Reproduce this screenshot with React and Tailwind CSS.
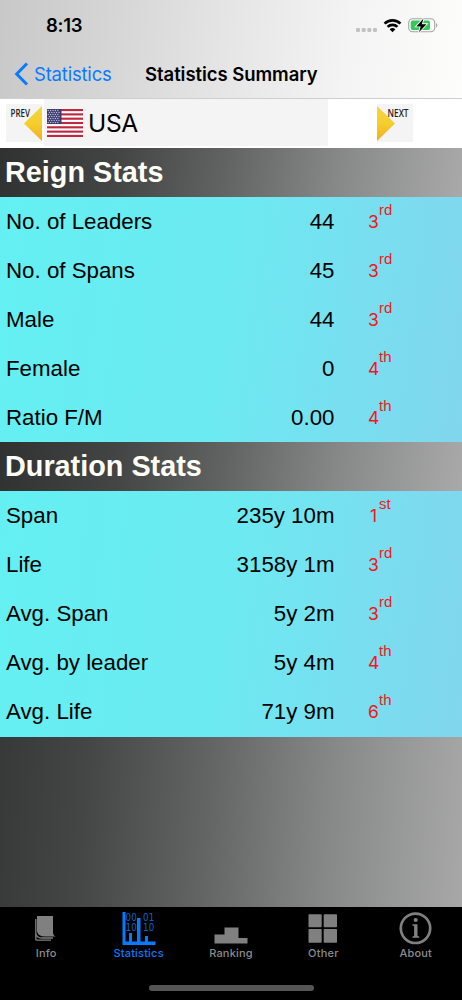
import React from 'react';

const reignStats = [
  { label: 'No. of Leaders', value: '44', rank: '3', suffix: 'rd' },
  { label: 'No. of Spans', value: '45', rank: '3', suffix: 'rd' },
  { label: 'Male', value: '44', rank: '3', suffix: 'rd' },
  { label: 'Female', value: '0', rank: '4', suffix: 'th' },
  { label: 'Ratio F/M', value: '0.00', rank: '4', suffix: 'th' },
];

const durationStats = [
  { label: 'Span', value: '235y 10m', rank: '1', suffix: 'st' },
  { label: 'Life', value: '3158y 1m', rank: '3', suffix: 'rd' },
  { label: 'Avg. Span', value: '5y 2m', rank: '3', suffix: 'rd' },
  { label: 'Avg. by leader', value: '5y 4m', rank: '4', suffix: 'th' },
  { label: 'Avg. Life', value: '71y 9m', rank: '6', suffix: 'th' },
];

function StatusBar() {
  return (
    <div className="flex h-[50px] items-start justify-between pl-[46px] pr-[24px] pt-[14px]">
      <span className="text-[18.5px] font-semibold leading-[22px] tracking-[-0.3px]">8:13</span>
      <svg className="mt-[2px]" width="84" height="20" viewBox="354 16 84 20">
        <g fill="#c2c2c2">
          <rect x="356" y="28" width="4" height="4" rx="1.2" />
          <rect x="361.7" y="28" width="4" height="4" rx="1.2" />
          <rect x="367.3" y="28" width="4" height="4" rx="1.2" />
          <rect x="373" y="28" width="4" height="4" rx="1.2" />
        </g>
        <g fill="none" stroke="#000" strokeWidth="2.7">
          <path d="M384.6 23.6a11.2 11.2 0 0 1 15.8 0" />
          <path d="M387.6 26.9a7 7 0 0 1 9.8 0" />
        </g>
        <path d="M389.6 29.3a4.2 4.2 0 0 1 5.8 0l-2.9 3z" fill="#000" />
        <rect x="408.7" y="18.7" width="26" height="13" rx="4" fill="#fafafa" stroke="#a5a5a5" strokeWidth="1.1" />
        <path d="M436.2 23c1.5.8 1.5 3.6 0 4.4z" fill="#999" />
        <rect x="410.7" y="20.6" width="19.3" height="9.3" rx="2" fill="#34c759" />
        <path d="M423.5 18.6l-7.2 7.8h4.4l-1.7 5.8 7.4-8h-4.6z" fill="#000" stroke="#fff" strokeWidth="1.8" paintOrder="stroke" />
      </svg>
    </div>
  );
}

function NavBar() {
  return (
    <div className="flex h-12 items-center pl-[14px]">
      <svg width="15" height="24" viewBox="0 0 15 24" fill="none" stroke="#087aff" strokeWidth="3">
        <path d="M13 1.5L2.7 12 13 22.5" />
      </svg>
      <span className="ml-[5px] w-[111px] text-[18.5px] leading-6 tracking-[-0.2px] text-[#087aff]">Statistics</span>
      <span className="whitespace-nowrap text-[18.5px] font-semibold leading-6 tracking-[-0.05px]">Statistics Summary</span>
    </div>
  );
}

function Flag() {
  return (
    <svg width="36" height="28" viewBox="0 0 36 28">
      <rect width="36" height="28" fill="#fff" />
      {[0, 1, 2, 3, 4, 5, 6].map((i) => (
        <rect key={i} y={i * 4.31} width="36" height="2.15" fill="#bf2940" />
      ))}
      <rect width="14.5" height="15" fill="#3c3b6e" />
      {[1.5, 3.5, 5.5, 7.5, 9.5, 11.5, 13.5].map((y, row) =>
        [1.2, 3.6, 6, 8.4, 10.8].map((x) => (
          <circle key={`${x}-${y}`} cx={x + (row % 2) * 1.2} cy={y} r="0.65" fill="#c5c5dd" />
        ))
      )}
    </svg>
  );
}

function ArrowGradient({ id }) {
  return (
    <defs>
      <linearGradient id={id} x1="0" y1="0" x2="0" y2="1">
        <stop offset="0" stopColor="#f4d53b" />
        <stop offset="0.5" stopColor="#f4ce2e" />
        <stop offset="1" stopColor="#f4ac20" />
      </linearGradient>
    </defs>
  );
}

function CountryRow() {
  return (
    <div className="flex h-[49px] bg-white">
      <svg className="ml-[6px] mt-[5px] font-['Open_Sans',sans-serif] text-[10px] font-semibold" width="36" height="38" viewBox="0 0 36 38">
        <ArrowGradient id="prevArrow" />
        <rect width="36" height="38" fill="#f4f4f4" />
        <path d="M36 2v35L18 19.5z" fill="url(#prevArrow)" />
        <text x="4.5" y="13" textLength="19.5" lengthAdjust="spacingAndGlyphs" fill="#222">PREV</text>
      </svg>
      <div className="ml-[2px] flex h-[47px] w-[284px] items-center bg-[#f4f4f4] pl-[3px]">
        <Flag />
        <span className="ml-[5px] text-[24.5px] leading-8 tracking-[-0.3px]">USA</span>
      </div>
      <svg className="ml-[49px] mt-[5px] font-['Open_Sans',sans-serif] text-[10px] font-semibold" width="36" height="38" viewBox="0 0 36 38">
        <ArrowGradient id="nextArrow" />
        <rect width="36" height="38" fill="#f4f4f4" />
        <path d="M0 2v35l18-17.5z" fill="url(#nextArrow)" />
        <text x="10.5" y="13" textLength="21" lengthAdjust="spacingAndGlyphs" fill="#222">NEXT</text>
      </svg>
    </div>
  );
}

function StatRow({ stat }) {
  return (
    <div className="flex h-[49.08px] items-center pl-[6px] font-['Liberation_Sans',Arial,sans-serif] text-[22.3px] leading-[26px]">
      <span className="w-[160px] whitespace-nowrap">{stat.label}</span>
      <span className="w-[168.5px] whitespace-nowrap text-right">{stat.value}</span>
      <div className="ml-[33.5px] flex text-[#f81418]">
        <span className="w-[11px] text-center font-['Inter',sans-serif] text-[17.5px] leading-6">{stat.rank}</span>
        <span className="-mt-[12px] text-[15px] leading-6">{stat.suffix}</span>
      </div>
    </div>
  );
}

function StatSection({ title, stats }) {
  return (
    <section>
      <h2 className="h-[49px] bg-[linear-gradient(98deg,#303231_0%,#444645_26%,#626463_49%,#878988_73%,#a9a9a9_100%)] pl-[5px] font-['Liberation_Sans',Arial,sans-serif] text-[28.8px] font-bold leading-[48px] text-[#fffff8]">
        {title}
      </h2>
      <div className="bg-[linear-gradient(97deg,#64f0f2_0%,#6ceaf1_48%,#78dff0_75%,#80d6ee_100%)]">
        {stats.map((stat) => (
          <StatRow key={stat.label} stat={stat} />
        ))}
      </div>
    </section>
  );
}

const tabs = [
  {
    name: 'Info',
    icon: (
      <svg width="36" height="36" viewBox="0 0 36 36" fill="#808080">
        <path d="M9 5h16v17q.3 3 3.5 3.6H17q-6.8 0-8-5z" />
        <path d="M7.8 8v14q.5 5 6 5H25M7.8 22v6.8q0 .4 1 .4H23" fill="none" stroke="#808080" strokeWidth="1.3" />
      </svg>
    ),
  },
  {
    name: 'Statistics',
    active: true,
    icon: (
      <svg width="36" height="36" viewBox="0 0 36 36" fill="#087aff">
        <path d="M1.5 1h3v29.5h30V34h-33z" />
        <path d="M8 22h3v9H8zM16 7h3.5v24H16zM24 25h3v6h-3z" />
        <g className="font-['DejaVu_Sans',sans-serif] text-[10px]" fill="#0764c8">
          <text x="4.5" y="10" textLength="11.5" lengthAdjust="spacingAndGlyphs">00</text>
          <text x="22" y="10" textLength="11.5" lengthAdjust="spacingAndGlyphs">01</text>
          <text x="4.5" y="20" textLength="11.5" lengthAdjust="spacingAndGlyphs">10</text>
          <text x="22" y="20" textLength="11.5" lengthAdjust="spacingAndGlyphs">10</text>
        </g>
      </svg>
    ),
  },
  {
    name: 'Ranking',
    icon: (
      <svg width="36" height="36" viewBox="0 0 36 36" fill="#808080">
        <path d="M1.5 23.5h10v-7h14V27h9v5.5h-33z" />
      </svg>
    ),
  },
  {
    name: 'Other',
    icon: (
      <svg width="36" height="36" viewBox="0 0 36 36" fill="#808080">
        <rect x="3.5" y="3.2" width="13.2" height="13" rx=".7" />
        <rect x="18.7" y="3.2" width="13.3" height="13" rx=".7" />
        <rect x="3.5" y="18" width="13.2" height="13.8" rx=".7" />
        <rect x="18.7" y="18" width="13.3" height="13.8" rx=".7" />
      </svg>
    ),
  },
  {
    name: 'About',
    icon: (
      <svg width="36" height="36" viewBox="0 0 36 36" fill="#808080">
        <circle cx="17.5" cy="17.3" r="14.7" fill="none" stroke="#808080" strokeWidth="2.7" />
        <circle cx="17.7" cy="9" r="2.1" />
        <path d="M14.4 13.3h5.1v11.7l1.8.6v1.1h-6.8v-1.1l1.6-.6V15l-1.7-.6z" />
      </svg>
    ),
  },
];

function TabBar() {
  return (
    <footer className="flex h-[93px] flex-col items-center bg-black">
      <nav className="flex w-full justify-between pt-[4px]">
        {tabs.map((tab) => (
          <div
            key={tab.name}
            className={`flex w-[92.4px] flex-col items-center text-[11px] font-medium leading-[13px] tracking-[0.2px] ${tab.active ? 'text-[#087aff]' : 'text-[#8c8c8c]'}`}
          >
            {tab.icon}
            <span>{tab.name}</span>
          </div>
        ))}
      </nav>
      <div className="mt-[25px] h-[6px] w-[165px] rounded-full bg-[#555]" />
    </footer>
  );
}

function App() {
  return (
    <div className="flex h-[1000px] w-[462px] flex-col overflow-hidden bg-[linear-gradient(94deg,#303231_0%,#444645_26%,#626463_49%,#878988_73%,#a9a9a9_100%)] font-['Inter',sans-serif] text-black">
      <header className="h-[99px] shrink-0 border-b border-[#cecece] bg-[linear-gradient(98deg,#c8c8c8_0%,#d6d6d6_25%,#e6e6e6_50%,#f4f4f4_75%,#fdfdfc_100%)]">
        <StatusBar />
        <NavBar />
      </header>
      <CountryRow />
      <main className="flex-1">
        <StatSection title="Reign Stats" stats={reignStats} />
        <StatSection title="Duration Stats" stats={durationStats} />
      </main>
      <TabBar />
    </div>
  );
}

export default App;
